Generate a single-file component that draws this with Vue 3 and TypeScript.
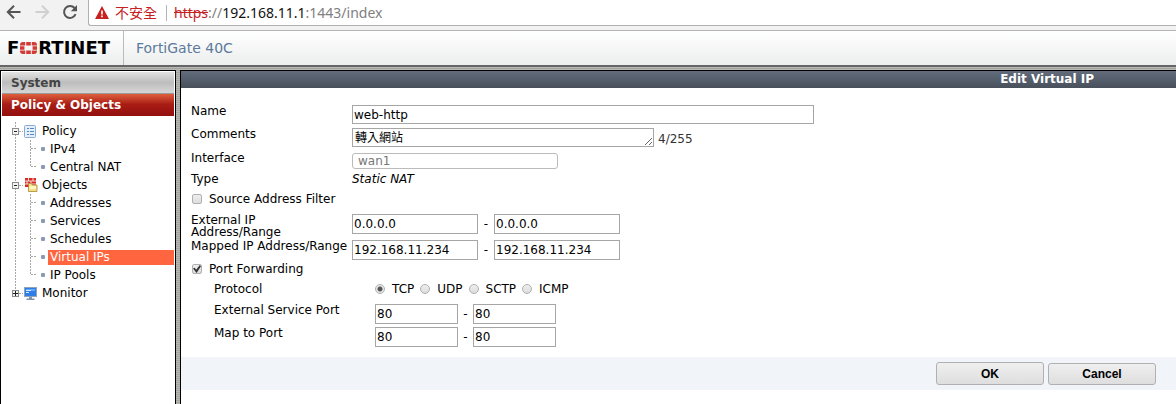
<script setup lang="ts">
import { ref } from 'vue'

interface TreeItem {
  label: string
  kind: 'group' | 'leaf'
  icon?: 'policy' | 'objects' | 'monitor'
  open?: boolean
  last?: boolean
  active?: boolean
}

const tree: TreeItem[] = [
  { label: 'Policy', kind: 'group', icon: 'policy', open: true },
  { label: 'IPv4', kind: 'leaf' },
  { label: 'Central NAT', kind: 'leaf', last: true },
  { label: 'Objects', kind: 'group', icon: 'objects', open: true },
  { label: 'Addresses', kind: 'leaf' },
  { label: 'Services', kind: 'leaf' },
  { label: 'Schedules', kind: 'leaf' },
  { label: 'Virtual IPs', kind: 'leaf', active: true },
  { label: 'IP Pools', kind: 'leaf', last: true },
  { label: 'Monitor', kind: 'group', icon: 'monitor', open: false, last: true },
]

const protocols = ['TCP', 'UDP', 'SCTP', 'ICMP']

const name = ref('web-http')
const comments = ref('轉入網站')
const iface = ref('wan1')
const sourceFilter = ref(false)
const externalFrom = ref('0.0.0.0')
const externalTo = ref('0.0.0.0')
const mappedFrom = ref('192.168.11.234')
const mappedTo = ref('192.168.11.234')
const portForwarding = ref(true)
const protocol = ref('TCP')
const servicePortFrom = ref('80')
const servicePortTo = ref('80')
const mapPortFrom = ref('80')
const mapPortTo = ref('80')
</script>

<template>
  <div class="page">
    <div class="browser">
      <button class="nav" type="button" aria-label="Back">
        <svg width="16" height="16" viewBox="0 0 16 16"><path d="M14.5 8H2M8 1.8 1.8 8 8 14.2" fill="none" stroke="#555" stroke-width="2" /></svg>
      </button>
      <button class="nav" type="button" aria-label="Forward" disabled>
        <svg width="16" height="16" viewBox="0 0 16 16"><path d="M1.5 8H14M8 1.8 14.2 8 8 14.2" fill="none" stroke="#d0d0d0" stroke-width="2" /></svg>
      </button>
      <button class="nav" type="button" aria-label="Reload">
        <svg width="16" height="16" viewBox="0 0 16 16"><path d="M13.6 10.2A6 6 0 1 1 12.6 4" fill="none" stroke="#555" stroke-width="2" /><path d="M15 1v6.2H8.8z" fill="#555" /></svg>
      </button>
      <div class="omnibox">
        <svg class="warn" width="14" height="13" viewBox="0 0 14 13"><path d="M7 0l7 13H0z" fill="#c5221f" /><path d="M6.2 4.6h1.6v4H6.2zM6.2 9.6h1.6v1.6H6.2z" fill="#fff" /></svg>
        <span class="insecure">不安全</span>
        <span class="divider"></span>
        <span class="url"><s>https</s>://<b>192.168.11.1</b>:1443/index</span>
      </div>
    </div>

    <header class="header">
      <div class="logo">
        <span>F</span>
        <svg width="17" height="12" viewBox="0 0 17 12">
          <g fill="#d23a35">
            <path d="M0 3.4V3a3 3 0 0 1 3-3h2.2v3.4zM6.2 0h4.6v3.4H6.2zM11.8 0H14a3 3 0 0 1 3 3v.4h-5.2zM0 4.3h4.4v3.4H0zM12.6 4.3H17v3.4h-4.4zM0 8.6h5.2V12H3a3 3 0 0 1-3-3zM6.2 8.6h4.6V12H6.2zM11.8 8.6H17V9a3 3 0 0 1-3 3h-2.2z" />
          </g>
        </svg>
        <span>RTINET</span>
      </div>
      <div class="model">FortiGate 40C</div>
    </header>

    <div class="body">
      <nav class="sidebar">
        <button class="section" type="button">System</button>
        <button class="section current" type="button">Policy &amp; Objects</button>
        <ul class="tree">
          <li v-for="item in tree" :key="item.label">
            <svg v-if="item.kind === 'group'" width="38" height="18" viewBox="0 0 38 18">
              <g stroke="#a8a8a8" stroke-dasharray="2 1" fill="none">
                <path :d="item.last ? 'M13.5 0V6' : 'M13.5 0V18'" />
                <path d="M17 9.5h4" />
              </g>
              <rect x="10.5" y="6.5" width="6" height="6" fill="#f4f4f4" stroke="#8c8c8c" />
              <path :d="item.open ? 'M12 9.5h3' : 'M11 9.5h5M13.5 7v5'" stroke="#222" />
              <g v-if="item.icon === 'policy'">
                <rect x="22.5" y="3.5" width="11" height="12" rx="1" fill="#e4effb" stroke="#8aacd4" />
                <path d="M25 6.5h2M25 9.5h2M25 12.5h2M28 6.5h4M28 9.5h4M28 12.5h4" stroke="#5788c0" />
              </g>
              <g v-else-if="item.icon === 'objects'">
                <path d="M23 2h11v9H23z" fill="#d82b24" />
                <path d="M23 5h11M23 8h11M26.5 2v3M31 2v3M25 5v3M29 5v3" stroke="#fff" stroke-width=".8" />
                <path d="M26.500 7.500h3l1 1.500h4.500v6.500h-8.500z" fill="#f6df7e" stroke="#a58a3a" stroke-width=".8" />
                <path d="M27.500 10h6.500v3h-6.500z" fill="#fff6c4" />
              </g>
              <g v-else>
                <rect x="22.5" y="3.5" width="12" height="9" fill="#2f7de6" stroke="#8fa3bd" />
                <path d="M24 5h9v2h-9z" fill="#64a7f5" /><path d="M24 6.5h5M24 8.5h3" stroke="#d5e9ff" />
                <path d="M27 13h3v1.500h2.500V16h-8v-1.500H27z" fill="#7f93ac" />
              </g>
            </svg>
            <svg v-else width="46" height="18" viewBox="0 0 46 18">
              <g stroke="#a8a8a8" stroke-dasharray="2 1" fill="none">
                <path d="M13.5 0V18" />
                <path :d="item.last ? 'M28.5 0V9' : 'M28.5 0V18'" />
                <path d="M29 8.5h6" />
              </g>
              <rect x="39" y="7" width="4" height="4" rx="1" fill="#8c99b3" />
            </svg>
            <a href="#" :class="{ active: item.active }">{{ item.label }}</a>
          </li>
        </ul>
      </nav>
      <div class="splitter"></div>

      <main class="main">
        <h1 class="title">Edit Virtual IP</h1>
        <form class="form" @submit.prevent>
          <div class="row">
            <label for="name">Name</label>
            <input id="name" v-model="name" class="field name" type="text" />
          </div>
          <div class="row tall">
            <label for="comments">Comments</label>
            <textarea id="comments" v-model="comments" class="field comments" rows="1"></textarea>
            <span class="count">4/255</span>
          </div>
          <div class="row short">
            <label for="iface">Interface</label>
            <select id="iface" v-model="iface" class="iface" disabled>
              <option value="wan1">wan1</option>
            </select>
          </div>
          <div class="row line">
            <span class="caption">Type</span>
            <em>Static NAT</em>
          </div>
          <div class="row short">
            <label class="check"><input v-model="sourceFilter" type="checkbox" />Source Address Filter</label>
          </div>
          <div class="row double">
            <label for="external-from" class="stacked">External IP Address/Range</label>
            <input id="external-from" v-model="externalFrom" class="field ip" type="text" />
            <span class="dash">-</span>
            <input v-model="externalTo" class="field ip" type="text" aria-label="External IP range end" />
          </div>
          <div class="row">
            <label for="mapped-from">Mapped IP Address/Range</label>
            <input id="mapped-from" v-model="mappedFrom" class="field ip" type="text" />
            <span class="dash">-</span>
            <input v-model="mappedTo" class="field ip" type="text" aria-label="Mapped IP range end" />
          </div>
          <div class="row line">
            <label class="check"><input v-model="portForwarding" type="checkbox" />Port Forwarding</label>
          </div>
          <div class="row short nested" role="radiogroup" aria-label="Protocol">
            <span class="caption">Protocol</span>
            <label v-for="p in protocols" :key="p" class="radio"><input v-model="protocol" type="radio" name="protocol" :value="p" />{{ p }}</label>
          </div>
          <div class="row nested">
            <label for="service-from">External Service Port</label>
            <input id="service-from" v-model="servicePortFrom" class="field port" type="text" />
            <span class="dash">-</span>
            <input v-model="servicePortTo" class="field port" type="text" aria-label="External service port end" />
          </div>
          <div class="row nested">
            <label for="map-from">Map to Port</label>
            <input id="map-from" v-model="mapPortFrom" class="field port" type="text" />
            <span class="dash">-</span>
            <input v-model="mapPortTo" class="field port" type="text" aria-label="Map to port end" />
          </div>
        </form>
        <div class="actions">
          <button class="ok" type="button">OK</button>
          <button type="button">Cancel</button>
        </div>
      </main>
    </div>
  </div>
</template>

<style>
body {
  margin: 0;
  background: #fff;
}
</style>

<style scoped>
* {
  box-sizing: border-box;
}
.page {
  display: flex;
  flex-direction: column;
  min-height: 100vh;
  font-family: "DejaVu Sans", "Noto Sans CJK TC", sans-serif;
  font-size: 12px;
  line-height: 16px;
  color: #000;
}
button,
input,
select,
textarea {
  margin: 0;
  font: inherit;
  color: inherit;
}

/* Browser toolbar */
.browser {
  display: flex;
  align-items: flex-start;
  gap: 12px;
  height: 30px;
  padding-left: 6px;
  background: #f2f2f2;
}
.nav {
  display: flex;
  width: 16px;
  padding: 4px 0 0;
  border: 0;
  background: none;
}
.omnibox {
  display: flex;
  flex: 1;
  align-items: center;
  height: 26px;
  margin-left: -2px;
  padding-left: 6px;
  border: 1px solid #b0b0b0;
  border-width: 0 0 1px 1px;
  border-bottom-left-radius: 3px;
  background: #fff;
  font-family: "Noto Sans", "Noto Sans CJK TC", sans-serif;
  font-size: 14px;
  line-height: 24px;
  color: #808080;
}
.insecure {
  margin-left: 6px;
  color: #c5221f;
}
.divider {
  width: 1px;
  height: 16px;
  margin: 0 7px 0 9px;
  background: #b4b4b4;
}
.url s {
  color: #c5221f;
}
.url b {
  font-weight: 400;
  color: #111;
}

/* Product header */
.header {
  display: flex;
  height: 37px;
  border-top: 1px solid #b4b4b4;
  border-bottom: 2px solid #666;
  background: linear-gradient(#fff, #eceeed);
}
.logo {
  display: flex;
  align-items: center;
  gap: 1px;
  width: 124px;
  padding-left: 7px;
  border-right: 1px solid #bbb;
  font-size: 18px;
  font-weight: 700;
}
.model {
  padding-left: 12px;
  font-size: 14px;
  line-height: 34px;
  color: #5c7a9c;
}

.body {
  display: flex;
  flex: 1;
  padding-top: 3px;
  background: repeating-linear-gradient(#b8b8b4 0 1px, #a3a39f 1px 2px);
}

/* Sidebar */
.sidebar {
  width: 176px;
  padding: 1px;
  border: 1px solid #000;
  border-bottom: 0;
  background: #fff;
}
.section {
  display: block;
  width: 100%;
  height: 22px;
  padding: 0 9px;
  border: 0;
  border-bottom: 1px solid #999;
  background: linear-gradient(#e2e2e2, #bdbdbd 50%, #d6d6d6);
  font-size: 12px;
  font-weight: 700;
  text-align: left;
  color: #444;
}
.section.current {
  border-bottom-color: #941010;
  background: linear-gradient(#df5f3c, #a81c14 50%, #941010);
  color: #fff;
}
.tree {
  margin: 0;
  padding: 6px 0 0;
  list-style: none;
}
.tree li {
  display: flex;
  align-items: center;
  height: 18px;
}
.tree svg {
  flex: none;
}
.tree a {
  flex: 1;
  padding-left: 2px;
  line-height: 15px;
  color: #000;
  text-decoration: none;
}
.tree a.active {
  background: #ff6640;
  color: #fff;
}
.splitter {
  width: 4px;
}

/* Main pane */
.main {
  flex: 1;
  min-width: 0;
  border: 1px solid #000;
  border-width: 1px 0 0 1px;
  background: #fff;
}
.title {
  margin: 0;
  padding-right: 82px;
  background: linear-gradient(#626c7c, #48505b);
  font-size: 12px;
  font-weight: 700;
  line-height: 17px;
  text-align: right;
  color: #fff;
}
.form {
  padding: 15px 10px 9px;
}
.row {
  display: flex;
  align-items: flex-start;
  min-height: 23px;
}
.row.tall {
  min-height: 24px;
}
.row.short {
  min-height: 21px;
}
.row.line {
  min-height: 20px;
}
.row.double {
  min-height: 26px;
}
.row > label:first-child,
.row > .caption {
  flex: none;
  width: 161px;
  white-space: nowrap;
}
.row.nested {
  padding-left: 23px;
}
.row > .stacked:first-child {
  padding: 2px 40px 0 0;
  line-height: 12px;
  white-space: normal;
}
.field {
  height: 20px;
  margin-top: 2px;
  padding: 0 1px;
  border: 1px solid #a6a6a6;
  border-radius: 0;
  background: #fff;
}
.name {
  width: 462px;
  height: 19px;
}
.comments {
  width: 302px;
  height: 19px;
  padding: 1px 2px 0;
  overflow: hidden;
  resize: both;
}
.count {
  padding: 5px 0 0 4px;
  color: #333;
}
.iface {
  width: 206px;
  height: 16px;
  margin-top: 3px;
  padding: 0 5px;
  appearance: none;
  border: 1px solid #bbb;
  border-radius: 3px;
  background: #fff;
  line-height: 14px;
  color: #777;
  opacity: 1;
}
.ip {
  width: 126px;
}
.port {
  width: 83px;
}
.dash {
  width: 16px;
  padding-top: 4px;
  text-align: center;
}
.nested .dash {
  width: 15px;
}
.check {
  display: flex;
  align-items: center;
  gap: 7px;
}
.check input,
.radio input {
  width: 10px;
  height: 10px;
  appearance: none;
  border: 1px solid #b0b0b0;
  border-radius: 2px;
  background: linear-gradient(#eee, #ddd);
}
.check input {
  margin-left: 1px;
}
.check input:checked::before {
  content: "";
  display: block;
  width: 8px;
  height: 8px;
  background: #333;
  clip-path: polygon(0 45%, 20% 35%, 40% 60%, 85% 0, 100% 15%, 45% 100%);
}
.radio {
  display: flex;
  align-items: center;
  gap: 7px;
  margin-right: 6px;
}
.radio input {
  border-radius: 50%;
}
.radio input:checked {
  background: radial-gradient(circle, #555 0 2px, #e8e8e8 3px);
}

.actions {
  display: flex;
  align-items: flex-end;
  justify-content: flex-end;
  gap: 4px;
  padding: 5px 20px;
  background: #f1f5fa;
}
.actions button {
  width: 108px;
  height: 22px;
  padding: 0;
  border: 1px solid #b0b0b0;
  border-radius: 3px;
  background: linear-gradient(#efefef, #dedede);
  font-family: "Liberation Sans", Arial, sans-serif;
  font-size: 12px;
  font-weight: 700;
}
.actions .ok {
  height: 23px;
}
</style>
